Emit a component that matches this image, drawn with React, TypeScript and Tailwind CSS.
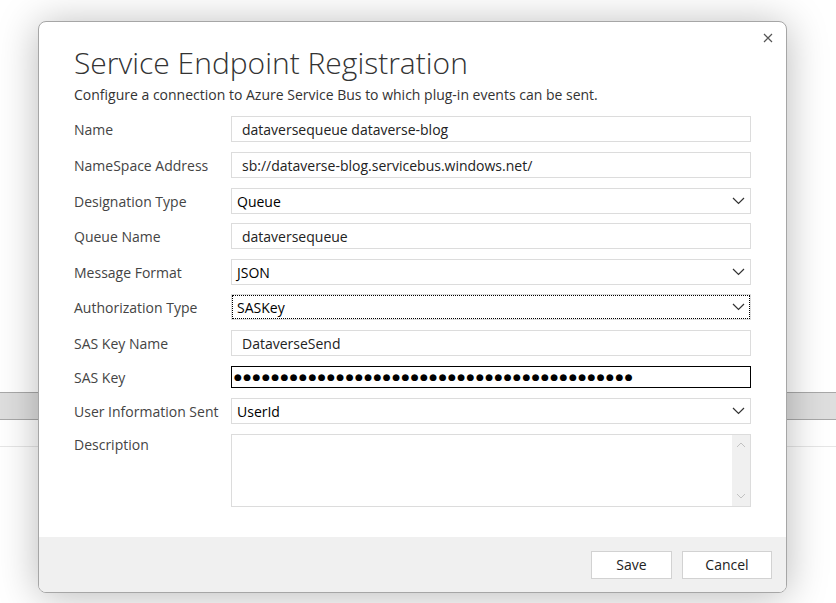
import React from 'react';

const font = { fontFamily: '"Open Sans", "Noto Sans", Arial, sans-serif' };

const Chevron = () => (
  <svg width="13" height="8" viewBox="0 0 13 8" className="shrink-0">
    <polyline points="1,1 6.5,6.5 12,1" fill="none" stroke="#333" strokeWidth="1.2" />
  </svg>
);

const TextBox = ({ value }: { value: string }) => (
  <div className="h-[26px] border border-[#dcdcdc] bg-white pl-[10px] flex items-center text-[14px] text-[#222]">
    {value}
  </div>
);

const SelectBox = ({ value, focused }: { value: string; focused?: boolean }) => (
  <div
    className={
      focused
        ? 'h-[26px] border border-[#dcdcdc] bg-white pl-[5px] pr-[5px] flex items-center justify-between text-[14px] text-black outline-1 outline-dotted outline-black -outline-offset-2'
        : 'h-[26px] border border-[#dcdcdc] bg-white pl-[5px] pr-[5px] flex items-center justify-between text-[14px] text-black'
    }
  >
    <span>{value}</span>
    <Chevron />
  </div>
);

const Row = ({ label, children, className }: { label: string; children: React.ReactNode; className?: string }) => (
  <div className={'grid grid-cols-[157px_520px] items-center ' + (className ?? '')}>
    <div className="text-[14px] text-[#444]">{label}</div>
    {children}
  </div>
);

export default function App() {
  return (
    <div className="relative w-full h-[603px] bg-white overflow-hidden" style={font}>
      {/* page behind the dialog */}
      <div className="h-[392px]" />
      <div className="h-[28px] border-y border-[#a8a8a8] bg-[#dedede]" />
      <div className="h-[27px] border-b border-[#e6e6e6]" />

      {/* dialog */}
      <div className="absolute left-[38px] top-[21px] w-[749px] h-[572px] rounded-[8px] border border-[#a6a6a6] bg-white shadow-[0_3px_40px_rgba(0,0,0,0.28)] flex flex-col overflow-hidden">
        <button className="absolute right-[11px] top-[9px] w-[14px] h-[14px] flex items-center justify-center">
          <svg width="10" height="10" viewBox="0 0 10 10">
            <path d="M1 1 L9 9 M9 1 L1 9" stroke="#555" strokeWidth="1.2" />
          </svg>
        </button>

        <div className="flex-1 pl-[35px]">
          <h1 className="mt-[19px] text-[30px] font-light leading-[44px] text-[#333]">Service Endpoint Registration</h1>
          <p className="mt-[1px] text-[14px] leading-[18px] text-[#333]">
            Configure a connection to Azure Service Bus to which plug-in events can be sent.
          </p>

          <div className="mt-[12px] flex flex-col">
            <Row label="Name">
              <TextBox value="dataversequeue dataverse-blog" />
            </Row>
            <Row label="NameSpace Address" className="mt-[10px]">
              <TextBox value="sb://dataverse-blog.servicebus.windows.net/" />
            </Row>
            <Row label="Designation Type" className="mt-[10px]">
              <SelectBox value="Queue" />
            </Row>
            <Row label="Queue Name" className="mt-[9px]">
              <TextBox value="dataversequeue" />
            </Row>
            <Row label="Message Format" className="mt-[10px]">
              <SelectBox value="JSON" />
            </Row>
            <Row label="Authorization Type" className="mt-[9px]">
              <SelectBox value="SASKey" focused />
            </Row>
            <Row label="SAS Key Name" className="mt-[10px]">
              <TextBox value="DataverseSend" />
            </Row>
            <Row label="SAS Key" className="mt-[10px]">
              <div className="h-[22px] border border-black bg-white pl-[2px] flex items-center overflow-hidden">
                <span className="text-[9px] tracking-[1.45px] text-black font-['DejaVu_Sans'] leading-none">
                  {'●'.repeat(43)}
                </span>
              </div>
            </Row>
            <Row label="User Information Sent" className="mt-[10px]">
              <SelectBox value="UserId" />
            </Row>
            <div className="mt-[10px] grid grid-cols-[157px_520px]">
              <div className="text-[14px] text-[#444] leading-[22px]">Description</div>
              <div className="h-[73px] border border-[#dcdcdc] bg-white flex justify-end">
                <div className="w-[18px] bg-[#f0f0f0] flex flex-col items-center justify-between py-[7px]">
                  <svg width="10" height="6" viewBox="0 0 10 6">
                    <polyline points="1,5 5,1 9,5" fill="none" stroke="#c2c2c2" strokeWidth="1" />
                  </svg>
                  <svg width="10" height="6" viewBox="0 0 10 6">
                    <polyline points="1,1 5,5 9,1" fill="none" stroke="#c2c2c2" strokeWidth="1" />
                  </svg>
                </div>
              </div>
            </div>
          </div>
        </div>

        <div className="h-[55px] bg-[#f0f0f0] flex items-center justify-end gap-[10px] pr-[14px]">
          <button className="w-[81px] h-[28px] border border-[#d2d2d2] bg-white text-[14px] text-[#222]">Save</button>
          <button className="w-[90px] h-[28px] border border-[#d2d2d2] bg-white text-[14px] text-[#222]">Cancel</button>
        </div>
      </div>
    </div>
  );
}
